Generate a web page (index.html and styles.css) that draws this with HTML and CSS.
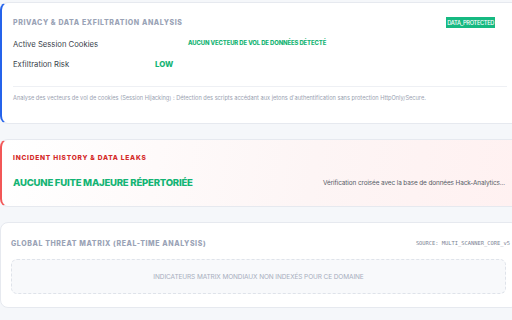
FILE: index.html
```html
<!DOCTYPE html>
<html lang="fr">
<head>
<meta charset="utf-8">
<link rel="stylesheet" href="styles.css">
</head>
<body>
<div class="wrap">
  <section class="card card-privacy">
    <div class="head">
      <h2 class="title">PRIVACY &amp; DATA EXFILTRATION ANALYSIS</h2>
      <span class="badge">DATA_PROTECTED</span>
    </div>
    <div class="rows">
      <div class="row">
        <span class="label">Active Session Cookies</span>
        <span class="val-small">AUCUN VECTEUR DE VOL DE DONNÉES DÉTECTÉ</span>
      </div>
      <div class="row">
        <span class="label">Exfiltration Risk</span>
        <span class="val-low">LOW</span>
      </div>
    </div>
    <p class="desc">Analyse des vecteurs de vol de cookies (Session Hijacking) : Détection des scripts accédant aux jetons d'authentification sans protection HttpOnly/Secure.</p>
  </section>

  <section class="card card-incident">
    <h2 class="title red">INCIDENT HISTORY &amp; DATA LEAKS</h2>
    <div class="incident-row">
      <span class="big-green">AUCUNE FUITE MAJEURE RÉPERTORIÉE</span>
      <span class="check">Vérification croisée avec la base de données Hack-Analytics...</span>
    </div>
  </section>

  <section class="card card-matrix">
    <div class="head">
      <h2 class="title">GLOBAL THREAT MATRIX (REAL-TIME ANALYSIS)</h2>
      <span class="source">SOURCE: MULTI_SCANNER_CORE_v5</span>
    </div>
    <div class="empty">INDICATEURS MATRIX MONDIAUX NON INDEXÉS POUR CE DOMAINE</div>
  </section>
</div>
</body>
</html>
```
FILE: styles.css
```css
html, body {
  margin: 0;
  padding: 0;
  background: #f5f7fa;
  overflow: hidden;
  font-family: Inter, "Noto Sans", sans-serif;
}
.wrap {
  width: 519px;
  padding-top: 2px;
  display: flex;
  flex-direction: column;
  gap: 15px;
}
.card {
  box-sizing: border-box;
  background: #fff;
  border: 1px solid #e6e9ef;
  border-radius: 8px;
  padding: 0 11px;
}
.card-privacy {
  border-left: 2px solid #2563eb;
  height: 122px;
  padding-top: 13px;
}
.head {
  display: flex;
  justify-content: space-between;
  align-items: center;
  height: 12px;
}
.title {
  margin: 0;
  font-size: 7px;
  font-weight: 800;
  letter-spacing: 0.6px;
  color: #9aa3b6;
}
.badge {
  background: #16b981;
  color: #fff;
  font-size: 5.7px;
  font-weight: 500;
  padding: 1px 1px;
  line-height: 9px;
  margin-right: 12px;
  letter-spacing: -0.35px;
}
.rows {
  margin-top: 6px;
}
.row {
  display: flex;
  align-items: center;
  height: 20px;
}
.label {
  width: 142px;
  font-size: 7.7px;
  color: #3a3f4b;
}
.val-small {
  margin-left: 33px;
  margin-top: -4px;
  font-size: 5.9px;
  font-weight: 800;
  color: #14b474;
  letter-spacing: -0.1px;
}
.val-low {
  font-size: 7.8px;
  font-weight: 800;
  color: #14b474;
}
.desc {
  margin: 12px 0 0;
  padding-top: 8px;
  border-top: 1px solid #eef0f4;
  font-size: 5.65px;
  color: #9aa2b1;
  letter-spacing: 0;
  white-space: nowrap;
}
.card-incident {
  border-left: 2px solid #f25757;
  background: linear-gradient(100deg, #ffffff 0%, #fdf5f5 60%, #fff1f1 100%);
  height: 68px;
  padding-top: 14px;
}
.title.red {
  color: #d42a2a;
  font-size: 6.6px;
  letter-spacing: 0.75px;
}
.incident-row {
  display: flex;
  justify-content: space-between;
  align-items: center;
  margin-top: 15px;
  padding-right: 2px;
}
.big-green {
  font-size: 9.6px;
  font-weight: 800;
  color: #14b474;
  letter-spacing: -0.25px;
}
.check {
  font-size: 6.4px;
  color: #555b66;
  letter-spacing: -0.1px;
}
.card-matrix {
  height: 86px;
  padding: 14px 10px 0;
}
.card-matrix .title {
  letter-spacing: 0.6px;
}
.source {
  font-family: "DejaVu Sans Mono", "Liberation Mono", monospace;
  font-size: 5.4px;
  color: #7b8394;
  margin-right: -2px;
}
.empty {
  margin-top: 10px;
  margin-right: 2px;
  height: 35px;
  box-sizing: border-box;
  border: 1px dashed #dfe3ea;
  border-radius: 6px;
  background: #f8f9fb;
  display: flex;
  align-items: center;
  justify-content: center;
  font-size: 6.5px;
  color: #a7aebd;
  letter-spacing: -0.1px;
}
```
